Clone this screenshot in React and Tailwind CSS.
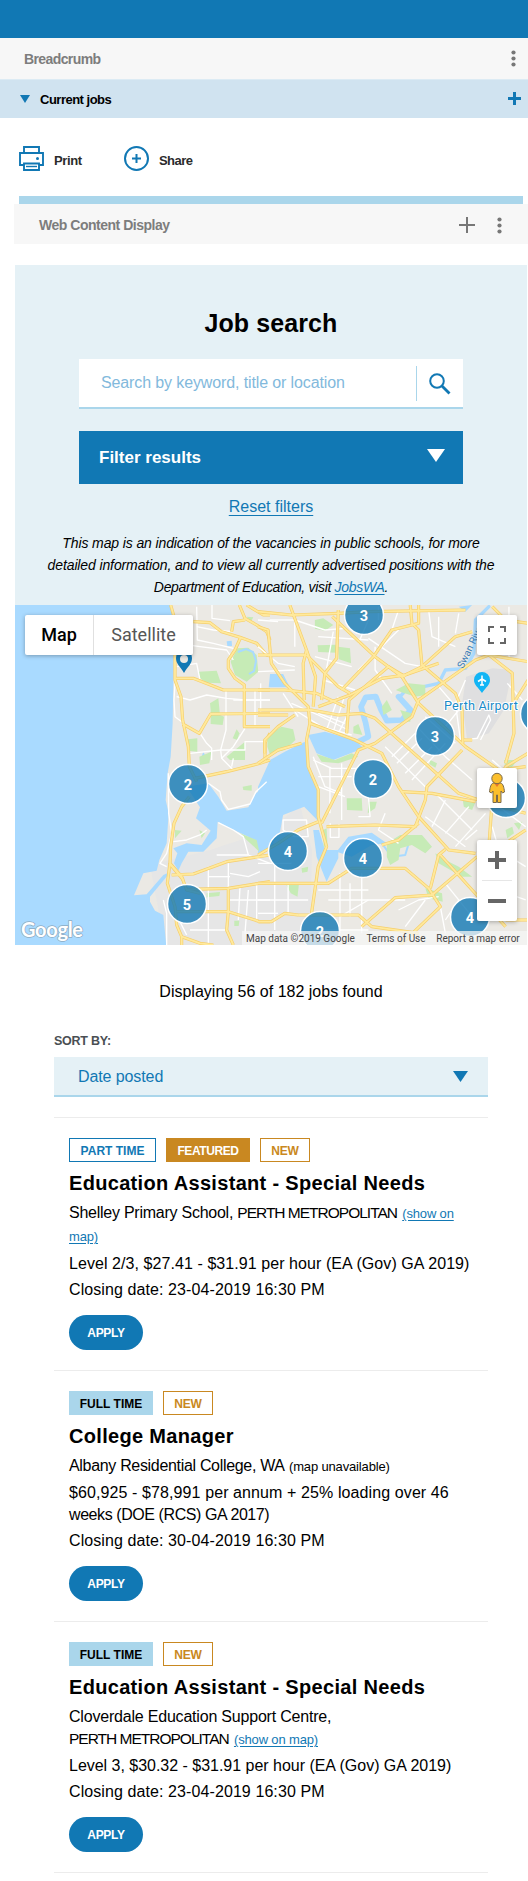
import React from "react";

function Dots() {
  return (
    <svg width="5" height="17" viewBox="0 0 5 17" fill="#777">
      <circle cx="2.5" cy="2.5" r="2.1" />
      <circle cx="2.5" cy="8.5" r="2.1" />
      <circle cx="2.5" cy="14.5" r="2.1" />
    </svg>
  );
}

const parksLeft = [
  "M595 215L650 212 663 250 620 248 600 235Z",
  "M630 310L655 295 660 345 672 350 668 375 632 372 632 330Z",
  "M563 418L592 415 592 455 565 452Z",
  "M598 470L634 455 628 490 600 495Z",
  "M680 470L735 425 735 480 690 480Z",
  "M698 415L710 388 718 400 712 420Z",
  "M692 185L712 145 745 143 770 165 775 215 740 245 705 225Z",
  "M620 880L660 876 658 888 620 892Z",
  "M525 690L545 692 525 715Z",
  "M598 690L615 700 605 715Z",
  "M720 700L770 720 778 755 740 720Z",
  "M703 962L718 962 716 978 703 978Z",
  "M728 560L755 555 755 572 730 570Z",
  "M740 50L760 52 752 66Z",
];
const parksRight = [
  "M28 405L70 380 105 388 112 420 80 450 35 462 28 440Z",
  "M240 140L275 145 278 190 242 178Z",
  "M178 136L232 134 236 158 180 156Z",
  "M170 60L195 55 225 75 200 92 170 86Z",
  "M412 270L450 250 500 255 500 285 470 290 425 275Z",
  "M370 320L385 300 400 330 375 345Z",
  "M440 365L425 330 458 340 455 365Z",
  "M285 380L300 372 312 405 285 400Z",
  "M175 462L230 480 280 460 300 470 240 490 190 485Z",
  "M265 595L310 595 312 632 266 630Z",
  "M330 605L355 605 350 625 328 640Z",
  "M385 730L425 705 490 705 520 740 500 760 460 735 425 745 420 780 395 795 385 770Z",
  "M530 760L560 780 600 800 640 830 610 830 540 790Z",
  "M500 865L550 880 552 905 510 895Z",
  "M515 480L535 490 530 503 512 492Z",
  "M85 855L122 855 118 890 98 880Z",
  "M130 805L150 800 148 815 132 818Z",
  "M740 690L760 680 765 700 745 715Z",
  "M765 670L790 665 780 690Z",
  "M612 600L650 605 640 630 615 620Z",
  "M195 690L205 685 208 740 196 740Z",
  "M735 480L775 480 760 500 740 510Z",
];
const minorLeft = [
  "M590 20L592 120L640 130 700 145", "M636 15L636 55 690 62", "M530 130L600 140 680 150 700 180",
  "M530 290L570 300 620 285 680 295 735 300H810", "M525 250L522 300 525 350 545 365",
  "M678 272L678 390 662 450", "M735 385L700 440 665 475", "M600 400L620 430 635 445 635 480", "M570 460L662 450H735L735 425H810",
  "M662 450L665 475 700 510", "M695 500L700 475", "M765 270V385", "M782 250V340", "M700 300H810",
  "M625 550L660 575 665 600 685 628 750 612 768 575 800 545",
  "M505 520L506 640 515 700 500 760 480 790 500 800", "M520 725L560 720 600 705 620 690",
  "M655 668L700 690 730 710 745 765 810 790", "M625 800V1035", "M650 765H745", "M685 790V865", "M720 860L715 960",
  "M745 870L735 1000 760 1000", "M540 965L560 1005", "M690 820L745 830 780 815", "M690 900H810", "M770 850V960", "M570 990H680", "M625 830H690", "M490 900L500 940 500 1035",
  "M530 200L590 190 600 240", "M590 80L640 90 700 95",
];
const minorRight = [
  "M35 60H110", "M110 60L200 90 260 85", "M110 50V140", "M0 60L60 65", "M180 110L330 120", "M225 95L205 205",
  "M330 60L300 130", "M330 115L440 190 490 200", "M300 210L420 90", "M0 140L60 190 110 200", "M0 215L110 210",
  "M75 280L120 350", "M110 330L190 380 280 405", "M180 340L260 370", "M100 310L180 345 270 390", "M240 290L205 390", "M258 290L225 395", "M275 330L240 400",
  "M195 240L290 270", "M170 170L280 200", "M350 140V210L400 280",
  "M165 480L220 505H300", "M180 530L280 530", "M180 560L260 590", "M215 500V640", "M250 490V660", "M165 470L200 560 250 580",
  "M400 470L470 400", "M415 490L490 415", "M440 520L520 440", "M460 540L560 430", "M480 385L560 470 640 540", "M380 440L500 560", "M500 350L590 430", "M540 260L600 330 560 380",
  "M560 600L520 680", "M530 580L640 690", "M500 650L620 740", "M560 700L630 620", "M590 740L680 640", "M620 720L655 690",
  "M75 660H145L150 710H110L75 690Z", "M216 670V712H242V672", "M330 590L335 650 300 650", "M380 640L360 690 420 730",
  "M0 790H100", "M50 790V990", "M90 850V940", "M0 900H150", "M0 940H60", "M245 820V1000", "M275 850V950", "M310 820V1000", "M210 900H330", "M180 870H330", "M245 950L330 900 440 900", "M180 990H330",
  "M420 930L480 900 540 890", "M440 980L500 900", "M560 850L640 950", "M600 900L560 960", "M545 920L560 1000",
  "M620 240L590 310 605 420", "M620 418L655 415 690 345 695 360 665 420", "M745 250L790 300", "M750 20V180", "M600 40L590 100", "M540 50V140", "M510 30L520 110 590 140", "M360 60V20", "M420 30L400 90",
  "M700 480L790 560", "M720 620L800 680", "M690 860L800 900", "M700 680L720 750 800 800",
];
const majorLeft = [
  "M512 15L525 60V240L543 290 548 360 565 440 568 500 590 545", "M568 590L545 620 522 670 512 740 510 790 545 830 560 870 600 880",
  "M580 65L630 68 665 95 720 112 770 130 800 165 810 168", "M718 15L735 55 770 75 800 95 810 120", "M695 95L700 65 735 60",
  "M722 112L705 150 685 180 685 205 705 235 733 255V380H810", "M528 235H580L670 270H810", "M548 372L598 400 632 342 810 340",
  "M585 535L680 515 780 490 810 480", "M810 400L795 430 795 485", "M515 825L580 822 680 785 810 765",
  "M560 868L685 865 810 845", "M530 935L685 935 780 965H810", "M685 865V935L680 990 700 1035", "M510 790L502 850 525 920 530 975 545 1010 600 1030 640 1035", "M545 1010V1035", "M740 15L790 45H810", "M512 795L550 840",
];
const majorRight = [
  "M0 80L30 90 40 190 80 250 150 320 155 370 145 420 150 500 180 570 180 650 205 740 180 800 160 940",
  "M95 15L145 150 172 230 165 320", "M145 150L135 190 138 300", "M0 35L100 45 240 40 330 35 620 30", "M240 30L235 175 200 220 190 300",
  "M222 50L350 170 430 230 480 310 620 440 720 510 800 500", "M145 165L240 260 275 280", "M0 165H140", "M0 270H80L175 280 260 320",
  "M0 330H110L160 330 240 345 310 340 350 355 410 410 500 490 600 580 690 610 800 640", "M0 345L90 345",
  "M155 370L290 420 370 460 420 560 480 650 570 750 650 760",
  "M0 490L60 450 130 430", "M20 460L20 420 60 380 110 345",
  "M180 320L275 285 370 235 440 225 540 190", "M265 400L272 300 390 200 440 230", "M430 230L490 200 590 110 640 95",
  "M455 15L460 70 480 90 490 195 590 280 610 330 612 430", "M345 170L250 270",
  "M345 170L400 90 480 70 480 15",
  "M190 670L300 450 350 430 460 350 480 300 650 180 690 165 807 185", "M205 680L350 675 470 680 500 600 505 560 610 450",
  "M430 575L520 580 650 605", "M690 165L760 220 765 400 740 490", "M807 460L740 500 700 600 690 740",
  "M0 765L60 730 120 690 180 665", "M0 850H210L280 805 440 805 510 865 545 920 420 1040", "M370 735L420 720 480 670",
  "M120 945L80 940 40 965H0", "M120 945H300L340 980 480 1000", "M310 980L410 893 520 885 655 770", "M515 865L540 765 560 748", "M545 765L640 870 740 980", "M655 760L740 730 800 690", "M615 420H640", "M700 20L740 60 807 70", "M807 240L770 300", "M807 960H740",
];

const clusters = [
  [364, 615, "3"], [435, 736, "3"], [373, 779, "2"], [188, 784, "2"], [187, 904, "5"],
  [288, 851, "4"], [363, 858, "4"], [506, 798, ""], [470, 917, "4"], [320, 931, "2"], [540, 714, ""],
];

function Roads({ list, ...rest }) {
  return list.map((d) => <path key={d} d={d} {...rest} />);
}

function Region({ transform, parks, minor, major }) {
  return (
    <g transform={transform} fill="none" strokeLinejoin="round">
      <g fill="#c6ebb6"><Roads list={parks} /></g>
      <g stroke="#fff" strokeWidth="4"><Roads list={minor} /></g>
      <g stroke="#f6cf6c" strokeWidth="9.5"><Roads list={major} /></g>
      <g stroke="#ffe99c" strokeWidth="5.5"><Roads list={major} /></g>
    </g>
  );
}

function MapArt() {
  return (
    <svg className="block" width="512" height="340" viewBox="15 605 512 340">
      <rect x="15" y="605" width="512" height="340" fill="#ebe9e4" />
      <path d="M150 865L210 850 270 830 300 805 312 850 310 945H165Z" fill="#e6e6e6" />
      <g transform="translate(0 600) scale(.33333)" fill="#a9daff">
        <path d="M45 15H510L522 50 520 250 518 370 512 470 503 520 497 600 506 640 500 730 478 780 470 812 430 820 402 886 440 883 490 825 512 815 450 890 450 905 465 932 490 945 500 1050H45Z" />
        <path d="M560 560L625 550 655 590 680 632 745 622 765 582 820 540V740L785 760 745 710 690 685 653 665 650 715 610 755 565 755 545 790 535 812 522 790 532 760 520 745 560 730 605 735 632 692 588 655 600 622Z" />
        <path d="M610 455L622 480 612 490 603 475Z" />
        <path d="M680 124L695 122 696 138 682 138Z" />
      </g>
      <g transform="translate(258 600) scale(.3346 .33333)">
        <path d="M622 230L700 205 760 210 735 330 690 400 625 420 610 310Z" fill="#dfdfe0" />
        <g fill="#a9daff">
          <path d="M0 560L36 480 80 455 140 425 150 500 185 580 182 665 138 620 75 645 65 700 30 745 0 760Z" />
          <path d="M150 405L200 395 290 420 315 445 225 480 175 460Z" />
          <path d="M36 222L75 222 95 262 32 262Z" />
          <path d="M165 690L182 690 200 750 240 750 240 775 205 845 175 770Z" />
          <path d="M235 755L270 710 340 698 385 730 340 735 280 770Z" />
          <path d="M600 20L640 15 620 35Z" />
        </g>
        <g fill="none" stroke="#a9daff" strokeLinecap="round" strokeLinejoin="round">
          <path d="M290 430L330 410 322 370 308 320 322 292 352 290 368 330 385 362 430 360 456 330 420 290" strokeWidth="17" />
          <path d="M425 290L440 272 540 250 560 210 620 205 645 160 650 60 690 20" strokeWidth="10" />
          <path d="M370 730L400 770 440 765 452 725" strokeWidth="6" />
        </g>
      </g>
      <Region transform="translate(0 600) scale(.33333)" parks={parksLeft} minor={minorLeft} major={majorLeft} />
      <path d="M238 652l8-3 7 3 3 9-2 10-5 3" stroke="#a9daff" strokeWidth="2" fill="none" />
      <Region transform="translate(258 600) scale(.3346 .33333)" parks={parksRight} minor={minorRight} major={majorRight} />
      <g fontFamily="Roboto, sans-serif">
        <text transform="translate(463 669) rotate(-64)" fontSize="10" fill="#3d7fb8">Swan River</text>
        <path d="M482 693c-4-6-8-8-8-13a8 8 0 0 1 16 0c0 5-4 7-8 13Z" fill="#12b5f5" />
        <path d="M482 675.500v9M478 681.500l4-2.500 4 2.500M480 685h4" stroke="#fff" strokeWidth="1.500" fill="none" />
        <text x="444" y="709.500" fontSize="12.700" textLength="74" fill="#1a8bc9" stroke="#fff" strokeWidth="2" paintOrder="stroke">Perth Airport</text>
      </g>
      <path d="M184 673c-4-7-8-9-8-15a8 8 0 0 1 16 0c0 6-4 8-8 15Z" fill="#1178b4" />
      <circle cx="184" cy="659" r="4" fill="#ebe9e4" />
      <g fontFamily="Roboto, sans-serif" fontWeight="700" fontSize="14.500" textAnchor="middle">
        {clusters.map(([x, y, n]) => (
          <g key={x}>
            <circle cx={x} cy={y} r="19.500" fill="#1178b4" fillOpacity=".8" stroke="#fff" strokeWidth="1.500" />
            <text x={x} y={y + 5.5} fill="#fff">{n}</text>
          </g>
        ))}
      </g>
    </svg>
  );
}

function MapPanel() {
  return (
    <div className="relative h-[340px] w-[512px] overflow-hidden font-['Roboto',sans-serif]">
      <MapArt />
      <div className="absolute left-[10px] top-[10px] flex h-10 rounded-[2px] bg-white text-[18px] leading-10 shadow-[0_1px_4px_rgba(0,0,0,0.3)]">
        <div className="w-[69px] border-r border-[#e0e0e0] text-center font-medium text-black">Map</div>
        <div className="w-[99px] text-center text-[#565656]">Satellite</div>
      </div>
      <div className="absolute left-[462px] top-[10px] flex size-10 items-center justify-center rounded-[2px] bg-white shadow-[0_1px_4px_rgba(0,0,0,0.3)]">
        <svg width="18" height="18" viewBox="0 0 18 18" fill="none" stroke="#666" strokeWidth="2"><path d="M1 6V1h5M12 1h5v5M17 12v5h-5M6 17H1v-5" /></svg>
      </div>
      <div className="absolute left-[462px] top-[163px] flex size-10 items-center justify-center rounded-[2px] bg-white shadow-[0_1px_4px_rgba(0,0,0,0.3)]">
        <svg width="18" height="32" viewBox="0 0 18 32" fill="#fbbf2d" stroke="#7a6a4a" strokeWidth="1">
          <path d="M5 11h8c2 1 3 4 3.500 9l-2 1-1.500-2v11.500H9.500V23h-1v7.500H5V19l-1.500 2-2-1C2 15 3 12 5 11Z" />
          <path d="M6 11l3 4 3-4Z" fill="#e5772e" stroke="none" />
          <circle cx="9" cy="6.500" r="5.200" />
        </svg>
      </div>
      <div className="absolute left-[462px] top-[235px] flex h-[81px] w-10 flex-col items-center rounded-[2px] bg-white shadow-[0_1px_4px_rgba(0,0,0,0.3)]">
        <svg width="40" height="81" viewBox="0 0 40 81" stroke="#666" strokeWidth="4" fill="none">
          <path d="M11 20h18M20 11v18M11 61h18" />
          <path d="M5 40.500h30" stroke="#e6e6e6" strokeWidth="1" />
        </svg>
      </div>
      <svg className="absolute bottom-0 left-[3px]" width="76" height="30" viewBox="0 0 76 30">
        <text x="3" y="21.500" fontFamily="Lato, sans-serif" fontSize="20" textLength="62" fill="#fff" stroke="#7f95a5" strokeOpacity=".7" strokeWidth="1.500" paintOrder="stroke" fontWeight="700">Google</text>
      </svg>
      <div className="absolute bottom-0 right-0 flex h-[14px] items-center bg-[#f5f5f5]/75 pt-px text-[10px] leading-[13px] whitespace-nowrap text-[#444]">
        <span className="w-[121px] pl-1">Map data ©2019 Google</span>
        <span className="w-[66px] text-center">Terms of Use</span>
        <span className="w-[98px] text-center">Report a map error</span>
      </div>
    </div>
  );
}

const tagStyles = {
  "PART TIME": "w-[87px] border border-[#1178b4] text-[#1178b4]",
  "FULL TIME": "w-[84px] bg-[#aad6eb] text-black",
  FEATURED: "w-[84px] bg-[#c98821] text-white tracking-[-0.4px]",
  NEW: "w-[50px] border border-[#c98821] text-[#c98821] tracking-[-0.2px]",
};

function Metro() {
  return <span className="text-[15.5px] tracking-[-1px]">PERTH METROPOLITAN</span>;
}

function MapLink({ children }) {
  return <a className="ml-px text-[13px] tracking-[-0.15px] text-[#1178b4] underline underline-offset-2">{children}</a>;
}

function Job({ tags, title, gap, place, pay, closing }) {
  return (
    <article className="flex flex-col items-start border-t border-[#ececec] pb-5 pl-[15px] pt-5">
      <div className="flex gap-[10px]">
        {tags.map((t) => (
          <span key={t} className={`flex h-6 items-center justify-center pt-px text-[12px] font-bold ${tagStyles[t]}`}>{t}</span>
        ))}
      </div>
      <h2 className={`${gap} mb-[5px] text-[20px] font-bold leading-7 tracking-[0.32px]`}>{title}</h2>
      {place}
      {pay}
      <p className="mt-1 h-[22px] leading-[22px] tracking-[0.09px]">Closing date: {closing}</p>
      <button className="mt-[14px] h-[35px] w-[74px] rounded-full bg-[#1178b4] text-[12px] font-bold tracking-[-0.3px] text-white">APPLY</button>
    </article>
  );
}

export default function App() {
  return (
    <div className="h-[1881px] w-[528px] overflow-hidden bg-white font-['Liberation_Sans',Arial,sans-serif] text-[16px] text-black">
      <div className="h-[38px] bg-[#1178b4]" />
      <div className="flex h-[41px] items-center justify-between bg-[#f7f7f7] pl-6 pr-3 text-[14px] font-bold tracking-[-0.6px] text-[#7d7d7d]">
        <span className="pt-[2px]">Breadcrumb</span>
        <Dots />
      </div>
      <div className="flex h-[39px] items-center border-t border-[#dcebf4] bg-[#d0e3f0] pl-5 pr-[7px]">
        <svg width="10" height="8" viewBox="0 0 10 8"><path d="M0 0h10L5 8Z" fill="#1178b4" /></svg>
        <span className="ml-[10px] grow pt-px text-[13px] font-bold tracking-[-0.5px]">Current jobs</span>
        <svg className="mb-[2px]" width="13" height="13" viewBox="0 0 13 13" stroke="#1178b4" strokeWidth="3"><path d="M0 6.500h13M6.500 0v13" /></svg>
      </div>
      <div className="flex h-[78px] items-start pl-[19px] pt-7 text-[13px] font-bold text-[#2b2b2b]">
        <svg width="25" height="25" viewBox="0 0 25 25" fill="none" stroke="#1178b4" strokeWidth="1.900">
          <path d="M5 7V1h15v6M5 19H1V7h23v12h-4M5 17.500h15V24H5Z" /><path d="M7 20.500h11" strokeWidth="1.400" /><circle cx="18.500" cy="12.500" r="1.500" fill="#1178b4" stroke="none" />
        </svg>
        <span className="ml-[10px] mt-[5px] w-[70px] tracking-[-0.4px]">Print</span>
        <svg width="25" height="25" viewBox="0 0 25 25" fill="none" stroke="#1178b4" strokeWidth="2"><circle cx="12.500" cy="12.500" r="11.500" /><path d="M8 12.500h9M12.500 8v9" /></svg>
        <span className="ml-[10px] mt-[5px] tracking-[-0.55px]">Share</span>
      </div>
      <div className="ml-[19px] mr-[5px] h-2 bg-[#aad6eb]" />
      <div className="ml-[14px] flex h-10 items-center bg-[#f7f7f7] pl-[25px] pr-[26px] text-[14px] font-bold tracking-[-0.48px] text-[#7d7d7d]">
        <span className="grow pt-[3px]">Web Content Display</span>
        <svg className="mr-[22px] mt-[2px]" width="16" height="16" viewBox="0 0 16 16" stroke="#777" strokeWidth="2"><path d="M0 8h16M8 0v16" /></svg>
        <span className="mt-[2px]"><Dots /></span>
      </div>

      <section className="ml-[15px] mr-px mt-[21px] flex h-[340px] flex-col items-center bg-[#e5f1f6]">
        <h1 className="mt-[43px] text-[25px] font-bold leading-[30px] tracking-[0.1px]">Job search</h1>
        <div className="mt-[21px] flex h-[50px] w-[384px] items-center border-b-2 border-[#aad6eb] bg-white pl-[22px]">
          <span className="grow pb-px tracking-[-0.12px] text-[#82b9dc]">Search by keyword, title or location</span>
          <div className="flex h-[35px] w-[47px] items-center border-l border-[#aad6eb] pl-3 pt-[2px]">
            <svg width="22" height="22" viewBox="0 0 22 22" fill="none" stroke="#1178b4"><circle cx="8" cy="8" r="6.800" strokeWidth="2" /><path d="M13 13L20.500 20.500" strokeWidth="2.800" /></svg>
          </div>
        </div>
        <div className="mt-[22px] flex h-[53px] w-[384px] items-center justify-between bg-[#1178b4] pl-5 pr-[18px] text-[17px] font-bold text-white">
          Filter results
          <svg className="mb-1" width="18" height="13" viewBox="0 0 18 13"><path d="M0 0h18L9 13Z" fill="#fff" /></svg>
        </div>
        <a className="mt-3 leading-[22px] text-[#1178b4] underline underline-offset-[3px]">Reset filters</a>
        <p className="mt-[14px] text-center text-[14px] italic leading-[22px] tracking-[-0.12px] whitespace-nowrap">
          This map is an indication of the vacancies in public schools, for more<br />
          detailed information, and to view all currently advertised positions with the<br />
          <span className="tracking-[-0.32px]">Department of Education, visit <a className="text-[#1178b4] underline underline-offset-2">JobsWA</a>.</span>
        </p>
      </section>
      <div className="ml-[15px]"><MapPanel /></div>

      <p className="ml-[15px] mr-px mt-9 text-center leading-[22px]">Displaying 56 of 182 jobs found</p>
      <div className="ml-[54px] mt-[29px] w-[434px]">
        <div className="h-[25px] text-[12.5px] font-bold leading-[18px] tracking-[-0.25px] text-[#4a4f53]">SORT BY:</div>
        <div className="mb-5 flex h-10 items-center justify-between border-b-2 border-[#aad6eb] bg-[#e5f1f6] pl-6 pr-5 tracking-[-0.1px] text-[#1178b4]">
          <span className="pt-[2px]">Date posted</span>
          <svg width="15" height="11" viewBox="0 0 15 11"><path d="M0 0h15L7.500 11Z" fill="#1178b4" /></svg>
        </div>
        <Job
          tags={["PART TIME", "FEATURED", "NEW"]}
          title="Education Assistant - Special Needs"
          gap="mt-[7px]"
          place={<p className="mb-px h-[45px] leading-[22px] tracking-[-0.25px] whitespace-nowrap">Shelley Primary School, <Metro /> <MapLink>(show on<br />map)</MapLink></p>}
          pay={<p className="mt-[5px] h-[22px] leading-[22px] tracking-[0.07px] whitespace-nowrap">Level 2/3, $27.41 - $31.91 per hour (EA (Gov) GA 2019)</p>}
          closing="23-04-2019 16:30 PM"
        />
        <Job
          tags={["FULL TIME", "NEW"]}
          title="College Manager"
          gap="mt-[7px]"
          place={<p className="h-[22px] leading-[22px] tracking-[-0.32px]">Albany Residential College, WA <span className="ml-px text-[13px] tracking-[-0.15px]">(map unavailable)</span></p>}
          pay={<p className="mt-[5px] h-11 leading-[22px] tracking-[0.1px] whitespace-nowrap">$60,925 - $78,991 per annum + 25% loading over 46<br /><span className="tracking-[-0.42px]">weeks (DOE (RCS) GA 2017)</span></p>}
          closing="30-04-2019 16:30 PM"
        />
        <Job
          tags={["FULL TIME", "NEW"]}
          title="Education Assistant - Special Needs"
          gap="mt-[7px]"
          place={<p className="h-11 leading-[22px] tracking-[-0.2px]">Cloverdale Education Support Centre,<br /><Metro /> <MapLink>(show on map)</MapLink></p>}
          pay={<p className="mt-[5px] h-[22px] leading-[22px] tracking-[-0.02px] whitespace-nowrap">Level 3, $30.32 - $31.91 per hour (EA (Gov) GA 2019)</p>}
          closing="23-04-2019 16:30 PM"
        />
        <div className="border-t border-[#ececec]" />
      </div>
    </div>
  );
}
